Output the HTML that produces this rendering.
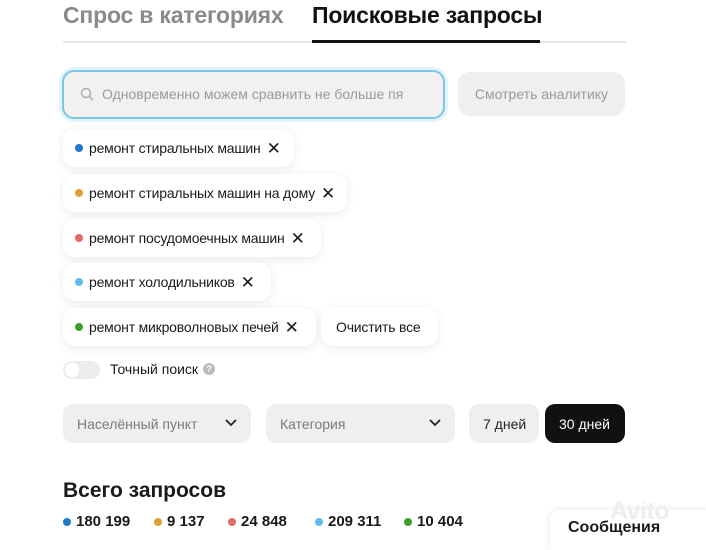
<!DOCTYPE html>
<html><head><meta charset="utf-8"><style>
*{box-sizing:border-box;margin:0;padding:0}
body{width:706px;height:540px;overflow:hidden;background:#fff;font-family:"Liberation Sans",sans-serif;color:#1a1a1a;position:relative}
.a{position:absolute}
.tab{font-size:23px;font-weight:bold;top:2px;letter-spacing:-0.2px}
.chip{position:absolute;left:63px;height:38px;background:#fff;border-radius:12px;box-shadow:0 2px 10px rgba(0,0,0,0.09);font-size:14px;letter-spacing:-0.2px;display:flex;align-items:center;padding-left:12px;white-space:nowrap}
.dot{width:8px;height:8px;border-radius:50%;margin-right:6px;display:inline-block}
.x{margin-left:6px;font-size:17px;line-height:1}
.sel{position:absolute;top:404px;height:39px;background:#f0efee;border-radius:10px;font-size:14px;color:#7a7a7a;display:flex;align-items:center;padding-left:14px}
.stat{position:absolute;top:513px;font-size:15px;font-weight:bold;display:flex;align-items:center}
.stat .dot{margin-right:5px}
</style></head><body>
<div class="a tab" style="left:63px;color:#8a8a8a">Спрос в категориях</div>
<div class="a tab" style="left:312px;color:#111">Поисковые запросы</div>
<div class="a" style="left:63px;top:41px;width:563px;height:2px;background:#e6e6e6"></div>
<div class="a" style="left:312px;top:40px;width:228px;height:3px;background:#111"></div>

<div class="a" style="left:62px;top:70px;width:383px;height:49px;border:2.5px solid #7ac8e6;border-radius:12px;background:#f2f1f0;box-shadow:0 0 0 3px #e3f4fb"></div>
<svg class="a" style="left:80px;top:87px" width="14" height="14" viewBox="0 0 14 14"><circle cx="6" cy="6" r="4.5" fill="none" stroke="#aaa" stroke-width="1.4"/><path d="M9.5 9.5L13 13" stroke="#aaa" stroke-width="1.4"/></svg>
<div class="a" style="left:102px;top:86px;font-size:14px;color:#9a9a9a;width:302px;overflow:hidden;white-space:nowrap">Одновременно можем сравнить не больше пят</div>
<div class="a" style="left:458px;top:72px;width:167px;height:44px;background:#f0efee;border-radius:12px;font-size:14px;color:#9a9a9a;text-align:center;line-height:44px">Смотреть аналитику</div>

<div class="chip" style="top:129px;width:231px"><span class="dot" style="background:#1f78c8"></span>ремонт стиральных машин<span class="x">✕</span></div>
<div class="chip" style="top:174px;width:284px"><span class="dot" style="background:#e0a030"></span>ремонт стиральных машин на дому<span class="x">✕</span></div>
<div class="chip" style="top:219px;width:258px"><span class="dot" style="background:#e06a6a"></span>ремонт посудомоечных машин<span class="x">✕</span></div>
<div class="chip" style="top:263px;width:208px"><span class="dot" style="background:#5bbde8"></span>ремонт холодильников<span class="x">✕</span></div>
<div class="chip" style="top:308px;width:253px"><span class="dot" style="background:#3aa02a"></span>ремонт микроволновых печей<span class="x">✕</span></div>
<div class="chip" style="top:308px;left:321px;width:117px;padding-left:15px">Очистить все</div>

<div class="a" style="left:63px;top:361px;width:37px;height:18px;border-radius:9px;background:#ececec"></div>
<div class="a" style="left:65px;top:363px;width:14px;height:14px;border-radius:50%;background:#fff"></div>
<div class="a" style="left:110px;top:361px;font-size:14px">Точный поиск</div>
<div class="a" style="left:203px;top:363px;width:12px;height:12px;border-radius:50%;background:#bbb;color:#fff;font-size:9px;text-align:center;line-height:12px;font-weight:bold">?</div>

<div class="sel" style="left:63px;width:188px">Населённый пункт<svg class="a" style="left:162px;top:15px" width="12" height="8"><path d="M1 1l5 5 5-5" fill="none" stroke="#222" stroke-width="1.8"/></svg></div>
<div class="sel" style="left:266px;width:189px">Категория<svg class="a" style="left:163px;top:15px" width="12" height="8"><path d="M1 1l5 5 5-5" fill="none" stroke="#222" stroke-width="1.8"/></svg></div>
<div class="sel" style="left:469px;width:70px;color:#222;padding-left:14px">7 дней</div>
<div class="sel" style="left:545px;width:80px;background:#111;color:#fff;padding-left:14px">30 дней</div>

<div class="a" style="left:63px;top:479px;font-size:21px;font-weight:bold">Всего запросов</div>
<div class="stat" style="left:63px"><span class="dot" style="background:#1f78c8"></span>180 199</div>
<div class="stat" style="left:154px"><span class="dot" style="background:#e0a030"></span>9 137</div>
<div class="stat" style="left:228px"><span class="dot" style="background:#e06a6a"></span>24 848</div>
<div class="stat" style="left:315px"><span class="dot" style="background:#5bbde8"></span>209 311</div>
<div class="stat" style="left:404px"><span class="dot" style="background:#3aa02a"></span>10 404</div>

<div class="a" style="left:550px;top:510px;width:160px;height:40px;background:#fff;border-radius:10px 0 0 0;box-shadow:0 0 8px rgba(0,0,0,0.1)"></div>
<div class="a" style="left:610px;top:497px;font-size:25px;font-weight:bold;color:#eee;letter-spacing:-0.5px">Avito</div>
<div class="a" style="left:568px;top:519px;font-size:16px;font-weight:bold">Сообщения</div>
</body></html>
